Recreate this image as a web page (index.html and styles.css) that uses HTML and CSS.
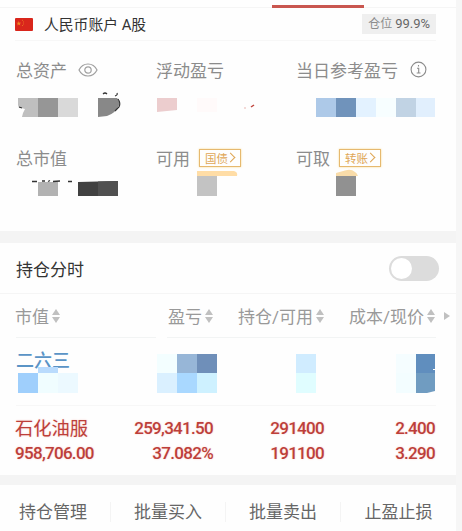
FILE: index.html
```html
<!DOCTYPE html>
<html lang="zh-CN">
<head>
  <meta charset="utf-8">
  <title>人民币账户</title>
  <link rel="stylesheet" href="styles.css">
</head>
<body>
  <div class="page">
    <div class="tabs"><span class="tab-line"></span></div>

    <div class="account">
      <svg class="flag" width="18" height="13" viewBox="0 0 18 13">
        <rect width="18" height="13" rx="1" fill="#d9261c"/>
        <path d="M3.8 3l.6 1.7h1.8L4.8 5.800l.5 1.700-1.500-1-1.500 1 .5-1.700-1.400-1.100h1.800z" fill="#f08a24"/>
        <path d="M7 2.300h1M8 4h1M8 6h1M7 7.500h1" stroke="#ee7a25" stroke-width=".8"/>
      </svg>
      <span class="account-name">人民币账户 A股</span>
      <span class="position">仓位 <b>99.9%</b></span>
    </div>

    <!-- Account totals -->
    <div class="stats">
      <div class="stat">
        <div class="label">总资产
          <svg class="eye" width="20" height="14" viewBox="0 0 20 14" fill="none" stroke="#a0a0a0" stroke-width="1.2">
            <path d="M1 7C3 3 6.300 1 10 1s7 2 9 6c-2 4-5.300 6-9 6S3 11 1 7z"/>
            <circle cx="10" cy="7" r="3.200"/>
          </svg>
        </div>
        <svg class="mask" width="120" height="30">
          <path d="M2 8h20v19H6q1-5 3-8-3-1-5-1-2-1-2-3z" fill="#bfbfbf"/>
          <rect x="22" y="8" width="20" height="19" fill="#969696"/>
          <rect x="42" y="8" width="20" height="19" fill="#d9d9d9"/>
          <path d="M82 8h19q3 3 2 7-3 8-12 11l-9 1z" fill="#888"/>
          <path d="M87 4q2-2 4 0M99 6q3-1 2-3M102 9q3 4 1 8l-4 4M3 17l3 1" stroke="#333" stroke-width="1.2" fill="none"/>
        </svg>
      </div>
      <div class="stat">
        <div class="label">浮动盈亏</div>
        <svg class="mask" width="120" height="30">
          <path d="M1 8h20v12L1 22z" fill="#eccdce"/>
          <rect x="41" y="8" width="20" height="14" fill="#fffafa"/>
          <path d="M95 17l3-2" stroke="#c0443c" stroke-width="1.5"/>
          <path d="M88 18h2" stroke="#e8b5b0"/>
        </svg>
      </div>
      <div class="stat">
        <div class="label">当日参考盈亏
          <svg class="info" width="17" height="17" viewBox="0 0 17 17" fill="none" stroke="#8c8c8c" stroke-width="1.100">
            <circle cx="8.500" cy="8.500" r="7.400"/>
            <path d="M8.500 4v1.600M7 7.300h1.700v4.600M6.700 12h3.800"/>
          </svg>
        </div>
        <svg class="mask" width="140" height="30">
          <rect x="20" y="8" width="20" height="19" fill="#adc9e8"/>
          <rect x="40" y="8" width="20" height="19" fill="#7093bb"/>
          <rect x="60" y="8" width="20" height="19" fill="#e3f2ff"/>
          <rect x="80" y="8" width="20" height="19" fill="#f7feff"/>
          <rect x="100" y="8" width="20" height="19" fill="#c1d3e4"/>
          <rect x="120" y="8" width="19" height="19" fill="#e1effd"/>
        </svg>
      </div>
      <div class="stat">
        <div class="label">总市值</div>
        <svg class="mask" width="120" height="30">
          <rect x="22" y="11" width="20" height="14" fill="#b2b2b2"/>
          <path d="M62 11l40-1v15H62z" fill="#414141"/>
          <path d="M82 10.500l20-.5v15H82z" fill="#505050"/>
          <path d="M16 10.500h5M26 10h3M32 10.500l2-1M37 10.500l7-.5M52 10.500h4" stroke="#333" stroke-width="1.300"/>
        </svg>
      </div>
      <div class="stat">
        <div class="label">可用 <span class="tag">国债<i class="chevron"></i></span></div>
        <svg class="mask" width="120" height="30">
          <path d="M41 0h37q4 1 3 5H41z" fill="#ffdda6"/>
          <rect x="41" y="5" width="20" height="20" fill="#c3c3c3"/>
        </svg>
      </div>
      <div class="stat">
        <div class="label">可取 <span class="tag">转账<i class="chevron"></i></span></div>
        <svg class="mask" width="120" height="30">
          <path d="M40 5V2l9-2.500q6-2 10 1.500 2 1 3 4z" fill="#f9dca9"/>
          <rect x="40" y="5" width="20" height="20" fill="#919191"/>
        </svg>
      </div>
    </div>

    <div class="gap"></div>

    <div class="section-title">
      <span>持仓分时</span>
      <span class="switch"></span>
    </div>

    <!-- Holdings table -->
    <div class="row head">
      <div>市值<span class="sort"></span></div>
      <div>盈亏<span class="sort"></span></div>
      <div>持仓/可用<span class="sort"></span></div>
      <div>成本/现价<span class="sort"></span></div>
      <span class="more"></span>
    </div>
    <div class="rule"><span></span><span></span></div>

    <div class="row masked">
      <div class="first">
        <div class="name">二六三</div>
        <svg class="mask name-mask" width="64" height="26">
          <rect x="22" y="0" width="20" height="6" fill="#b9dbfd"/>
          <rect x="2" y="6" width="20" height="20" fill="#9fcffc"/>
          <rect x="22" y="6" width="20" height="20" fill="#f0fdff"/>
          <rect x="42" y="6" width="20" height="20" fill="#ecf9ff"/>
        </svg>
      </div>
      <svg class="mask profit-mask" width="60" height="39">
        <rect width="20" height="19" fill="#f3feff"/>
        <rect x="20" width="20" height="19" fill="#97b6d7"/>
        <rect x="40" width="20" height="19" fill="#6f8fb9"/>
        <rect y="19" width="20" height="20" fill="#daf0ff"/>
        <rect x="20" y="19" width="20" height="20" fill="#a9d8ff"/>
        <rect x="40" y="19" width="20" height="20" fill="#cef1ff"/>
      </svg>
      <svg class="mask amount-mask" width="20" height="39">
        <rect width="20" height="19" fill="#d0ecff"/>
        <rect y="19" width="20" height="20" fill="#e0fdff"/>
      </svg>
      <svg class="mask price-mask" width="39" height="39">
        <rect width="20" height="19" fill="#f5fdff"/>
        <rect x="20" width="19" height="19" fill="#608ebe"/>
        <rect y="19" width="20" height="20" fill="#f3fdff"/>
        <path d="M20 19h19v18l-8 2H20z" fill="#709cc1"/>
        <path d="M37 15.500h2" stroke="#fff"/>
      </svg>
    </div>

    <div class="row stock">
      <div><div class="name">石化油服</div>958,706.00</div>
      <div><div>259,341.50</div>37.082%</div>
      <div><div>291400</div>191100</div>
      <div><div>2.400</div>3.290</div>
    </div>

    <div class="gap small"></div>

    <div class="actions">
      <span>持仓管理</span>
      <span>批量买入</span>
      <span>批量卖出</span>
      <span>止盈止损</span>
    </div>
  </div>
</body>
</html>
```
FILE: styles.css
```css
* {
  box-sizing: border-box;
}

body {
  margin: 0;
  background: #f6f6f6;
  font-family: Roboto, "Noto Sans CJK SC", sans-serif;
  font-size: 17px;
  color: #333;
}

.page {
  width: 456px;
  height: 531px;
  overflow: hidden;
  background: #fefefe;
}

svg {
  display: block;
  flex: none;
}

/* Top */
.tabs {
  height: 8px;
  padding: 5px 0 0 272px;
  border-bottom: 1px solid #f5f5f5;
}

.tab-line {
  display: block;
  width: 92px;
  height: 3px;
  background: #c9564f;
}

.account {
  display: flex;
  align-items: center;
  height: 33px;
  margin: 0 20px 0 15px;
  border-bottom: 1px solid #f7f7f7;
}

.account-name {
  margin: -1px 0 0 11px;
  font-size: 14.8px;
}

.position {
  height: 20px;
  margin-left: auto;
  padding: 0 6px;
  background: #efefef;
  color: #8c8c8c;
  font-size: 12px;
  line-height: 20px;
  white-space: nowrap;
}

.position b {
  color: #666;
  font-size: 13px;
  font-weight: 400;
}

/* Totals */
.stats {
  display: grid;
  grid-template-columns: 140px 140px 140px;
  grid-template-rows: 88px 86px;
  padding: 16px 0 0 16px;
}

.label {
  display: flex;
  align-items: center;
  height: 25px;
  color: #8c8c8c;
  white-space: nowrap;
}

.stats .mask {
  margin-top: 8px;
  overflow: visible;
}

.stat:nth-child(n+4) .mask {
  margin-top: 1px;
}

.eye,
.info {
  margin-left: 11px;
}

.info {
  margin-left: 12px;
}

.tag {
  display: flex;
  align-items: center;
  width: 42px;
  height: 18px;
  margin-left: 9px;
  padding-left: 5px;
  border: 1px solid #e6b96f;
  box-shadow: 0 0 2px #f8d98f;
  color: #e0a757;
  font-size: 11.5px;
}

.chevron {
  width: 7px;
  height: 7px;
  margin-left: -1px;
  border: solid #dfa552;
  border-width: 1.5px 1.5px 0 0;
  transform: rotate(45deg);
}

.gap {
  height: 12px;
  background: #f4f4f4;
}

.gap.small {
  height: 10px;
}

.section-title {
  display: flex;
  align-items: center;
  justify-content: space-between;
  height: 51px;
  padding: 0 17px 0 16px;
  border-bottom: 1px solid #f5f5f5;
}

.switch {
  width: 50px;
  height: 25px;
  padding: 2px;
  border-radius: 13px;
  background: #dcdcdc;
}

.switch::before {
  content: "";
  display: block;
  width: 21px;
  height: 21px;
  border-radius: 50%;
  background: #fff;
}

/* Holdings */
.row {
  display: grid;
  grid-template-columns: 112px 86px 111px 111px auto;
  justify-content: start;
  justify-items: end;
  padding-left: 16px;
}

.row > :first-child {
  justify-self: start;
}

.head {
  height: 43px;
  padding-left: 15px;
  align-items: center;
  color: #999;
}

.head div {
  display: flex;
  align-items: center;
  white-space: nowrap;
}

.sort {
  margin-left: 3px;
}

.sort::before,
.sort::after {
  content: "";
  display: block;
  border: solid transparent;
  border-width: 0 4.5px 6px;
  border-bottom-color: #c0c0c0;
}

.sort::after {
  margin-top: 2px;
  border-width: 6px 4.5px 0;
  border-top-color: #c0c0c0;
}

.more {
  margin-left: 9px;
  border: solid transparent;
  border-width: 4px 0 4px 6px;
  border-left-color: #c0c0c0;
}

.rule {
  display: flex;
  gap: 11px;
  padding: 0 20px 0 16px;
}

.rule span {
  width: 140px;
  height: 1px;
  background: #f2f4f4;
}

.rule span + span {
  flex: 1;
}

.masked {
  height: 67px;
  padding-top: 16px;
}

.masked .first {
  margin-top: -6px;
}

.name {
  height: 25px;
  font-size: 18px;
  line-height: 25px;
  letter-spacing: 0;
}

.masked .name {
  color: #5a94c6;
  font-weight: 500;
}

.name-mask {
  position: relative;
  margin-top: -6px;
}

.profit-mask {
  margin-right: -3px;
}

.amount-mask {
  margin-right: 9px;
}

.price-mask {
  margin-right: 1px;
}

.stock {
  height: 70px;
  padding: 11px 0 0 15px;
  color: #bd3f3a;
  font-size: 17px;
  font-weight: 500;
  line-height: 25px;
  letter-spacing: -0.7px;
  text-align: right;
  text-shadow: 0 0 2px #f6c9c4;
}

.stock > div:first-child {
  text-align: left;
}

.stock .name {
  font-size: 18.3px;
  font-weight: 400;
}

.masked + .stock {
  background: linear-gradient(#f7f7f7, #f7f7f7) 16px 0 / 420px 1px no-repeat;
}

/* Bottom buttons */
.actions {
  display: grid;
  grid-template-columns: 110px 115px 115px 116px;
  padding-top: 17px;
  color: #666;
}

.actions span {
  height: 20px;
  border-left: 1px solid #f4f4f4;
  line-height: 21px;
  text-align: center;
}

.actions span:first-child {
  padding-right: 4px;
  border-left: 0;
}
```
